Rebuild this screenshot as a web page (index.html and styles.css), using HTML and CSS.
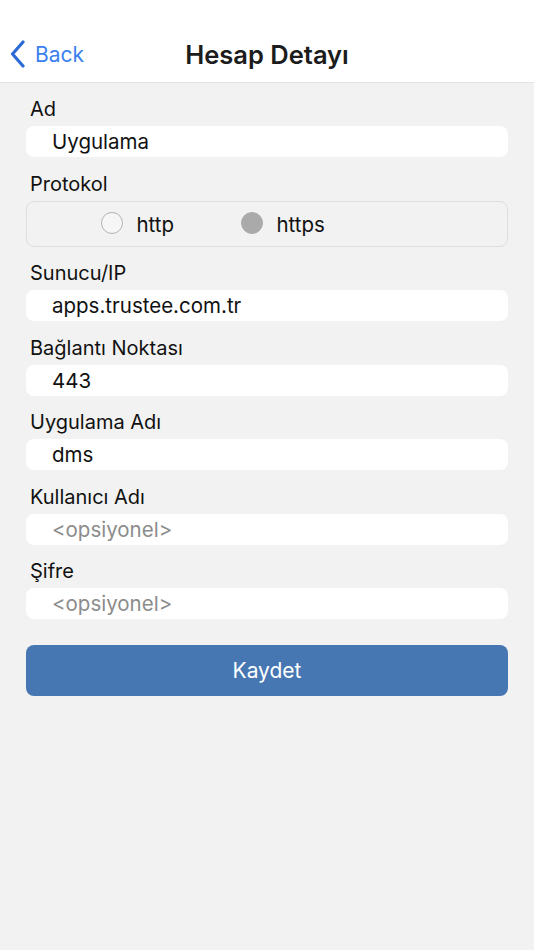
FILE: index.html
```html
<!DOCTYPE html>
<html lang="tr">
<head>
<meta charset="utf-8">
<title>Hesap Detayı</title>
<link rel="stylesheet" href="styles.css">
</head>
<body>
  <header class="navbar">
    <a class="back" href="#">
      <svg class="chevron" width="16" height="28" viewBox="0 0 16 28" aria-hidden="true">
        <path d="M13 2 L2.5 14 L13 26" fill="none" stroke="#2c6bd6" stroke-width="3.2" stroke-linecap="round" stroke-linejoin="round"/>
      </svg>
      <span>Back</span>
    </a>
    <h1 class="title">Hesap Detayı</h1>
  </header>

  <main class="form">
    <div class="field">
      <label class="label">Ad</label>
      <div class="input">Uygulama</div>
    </div>

    <div class="field">
      <label class="label">Protokol</label>
      <div class="radio-group">
        <span class="radio"><span class="dot"></span>http</span>
        <span class="radio"><span class="dot checked"></span>https</span>
      </div>
    </div>

    <div class="field">
      <label class="label">Sunucu/IP</label>
      <div class="input">apps.trustee.com.tr</div>
    </div>

    <div class="field">
      <label class="label">Bağlantı Noktası</label>
      <div class="input">443</div>
    </div>

    <div class="field">
      <label class="label">Uygulama Adı</label>
      <div class="input">dms</div>
    </div>

    <div class="field">
      <label class="label">Kullanıcı Adı</label>
      <div class="input placeholder">&lt;opsiyonel&gt;</div>
    </div>

    <div class="field">
      <label class="label">Şifre</label>
      <div class="input placeholder">&lt;opsiyonel&gt;</div>
    </div>

    <button class="save" type="button">Kaydet</button>
  </main>
</body>
</html>
```

FILE: styles.css
```css
* {
  box-sizing: border-box;
}

html, body {
  margin: 0;
  padding: 0;
  height: 100%;
}

body {
  background: #f2f2f2;
  font-family: Inter, "Liberation Sans", Arial, sans-serif;
  color: #111;
}

.navbar {
  position: relative;
  height: 83px;
  background: #ffffff;
  border-bottom: 1px solid #e3e3e3;
  display: flex;
  align-items: flex-end;
  justify-content: center;
  padding-bottom: 12px;
}

.back {
  position: absolute;
  left: 10px;
  top: 40px;
  display: flex;
  align-items: center;
  gap: 9px;
  color: #3a80f0;
  text-decoration: none;
  font-size: 21px;
}

.chevron {
  display: block;
}

.title {
  margin: 0;
  font-size: 25.5px;
  font-weight: 600;
  color: #1c1c1c;
  line-height: 30px;
}

.form {
  padding: 11px 26px 0;
  display: flex;
  flex-direction: column;
}

.field {
  display: flex;
  flex-direction: column;
  gap: 5px;
  margin-bottom: 11.5px;
}

.label {
  font-size: 20px;
  line-height: 24px;
  padding: 3px 0 0 4px;
  color: #111;
}

.input {
  height: 31px;
  background: #ffffff;
  border-radius: 8px;
  padding-left: 26px;
  font-size: 20.5px;
  line-height: 31px;
  color: #111;
}

.input.placeholder {
  color: #8c8c8c;
}

.radio-group {
  height: 46px;
  border: 1.5px solid #dedede;
  border-radius: 8px;
  display: flex;
  align-items: center;
  padding-left: 73.5px;
  font-size: 20.5px;
}

.radio {
  display: flex;
  align-items: center;
  gap: 14px;
  padding-top: 2px;
  width: 140px;
}

.dot {
  width: 22px;
  height: 22px;
  border-radius: 50%;
  border: 1.5px solid #b3b3b3;
  background: #f6f6f6;
  margin-top: -4px;
  flex: none;
}

.dot.checked {
  background: #aaaaaa;
  border-color: #aaaaaa;
}

.save {
  margin-top: 14.5px;
  height: 51px;
  border: none;
  border-radius: 8px;
  background: #4677b2;
  color: #ffffff;
  font-family: inherit;
  font-size: 21px;
}
```
